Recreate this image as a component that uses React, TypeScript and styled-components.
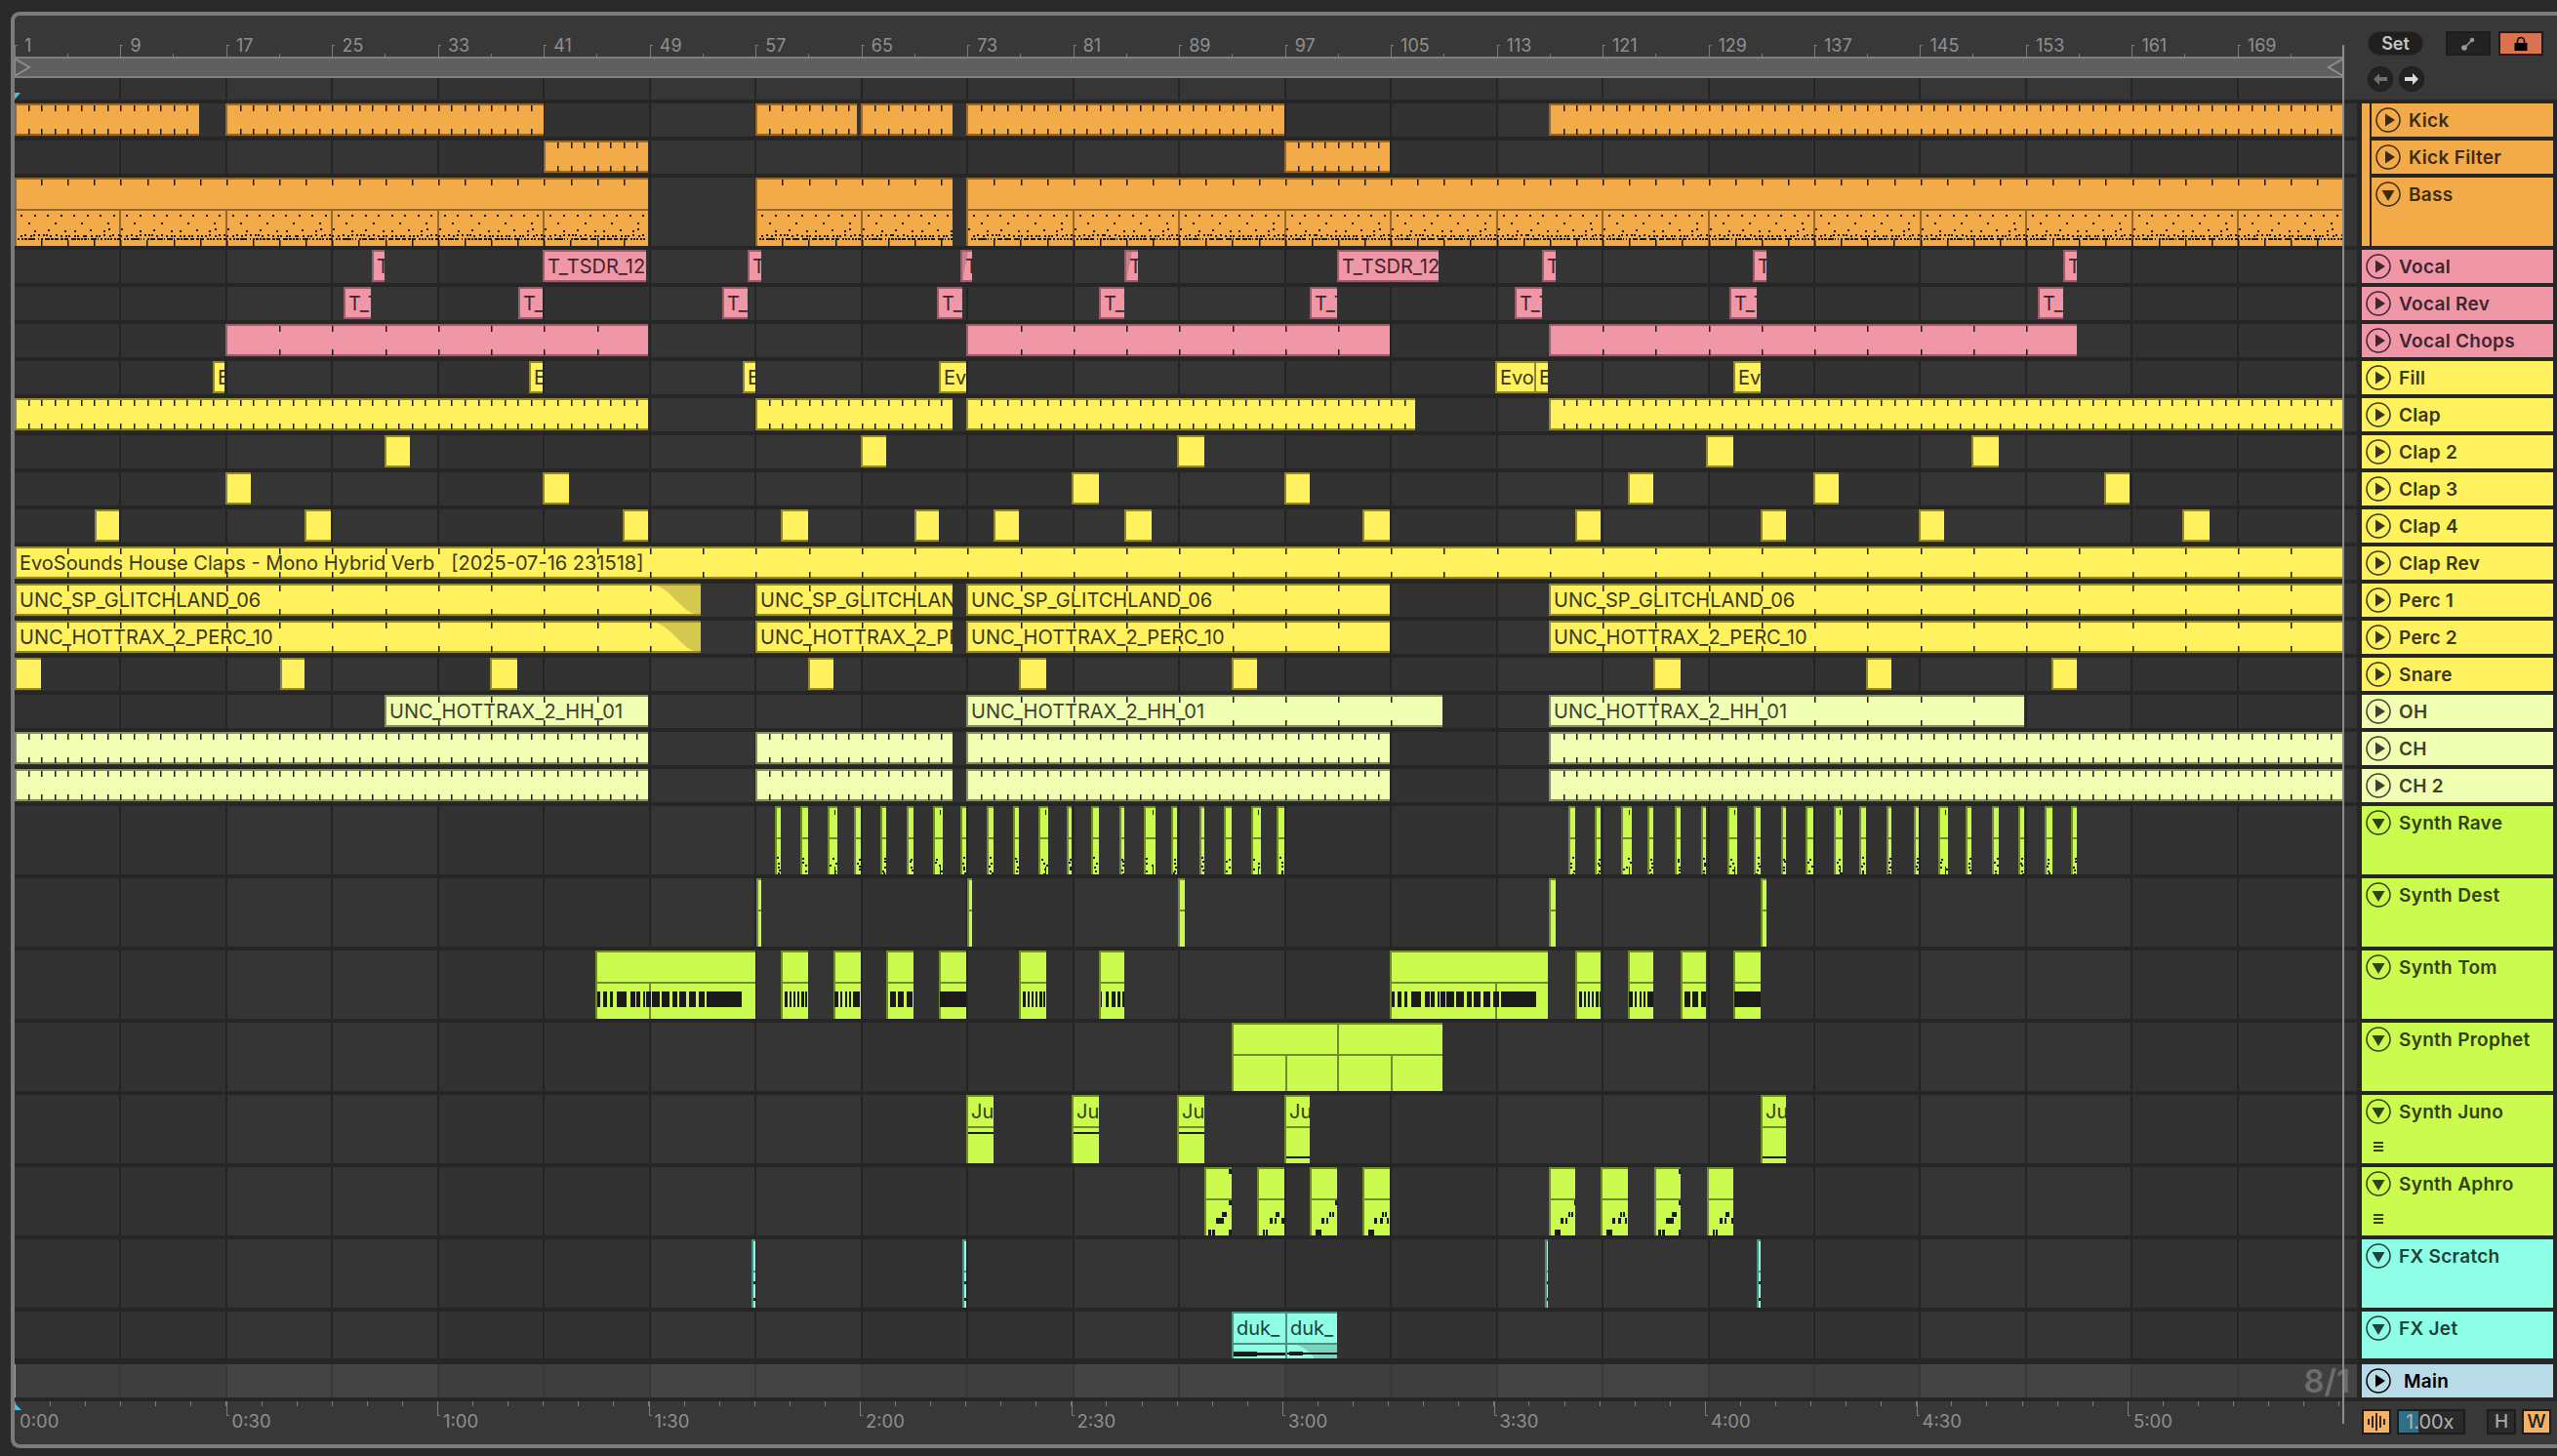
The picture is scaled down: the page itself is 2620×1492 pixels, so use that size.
import styled, { createGlobalStyle, css } from 'styled-components'

const ORIGIN = 15
const BAR = 13.56
const barX = (bar: number) => (bar - 1) * BAR

const GlobalStyle = createGlobalStyle`
  html, body {
    margin: 0;
    padding: 0;
    width: 2620px;
    height: 1492px;
    overflow: hidden;
    background: #2a2a2a;
  }
  body {
    font-family: Inter, "Liberation Sans", sans-serif;
  }
`

type Tint = { bg: string; edge: string; ink: string }

const tints: Record<string, Tint> = {
  orange: { bg: '#f3ab4a', edge: '#94692f', ink: '#3d2b10' },
  pink: { bg: '#f097a7', edge: '#96606b', ink: '#41242d' },
  yellow: { bg: '#fff25e', edge: '#8f8838', ink: '#3a3713' },
  pale: { bg: '#f1ffb2', edge: '#858c67', ink: '#3d4130' },
  lime: { bg: '#ccfb4f', edge: '#738c2f', ink: '#33400f' },
  cyan: { bg: '#8effe6', edge: '#4f8f82', ink: '#21403a' },
  main: { bg: '#b9dbe8', edge: '#6d8792', ink: '#000000' },
}

const timelineBg = (a: string, b: string, line: string) => css`
  background:
    linear-gradient(${a}, ${a}) 0 0 / 1px 100% no-repeat,
    repeating-linear-gradient(90deg, ${line} 0 1px, transparent 1px 107.47px, ${line} 107.47px 108.47px),
    repeating-linear-gradient(90deg, ${a} 0 216.94px, ${b} 216.94px 433.88px);
`

const Frame = styled.div`
  position: relative;
  box-sizing: border-box;
  width: 2609px;
  height: 1472px;
  margin: 12px 0 0 11px;
  border: 4px solid #7b7b7b;
  border-right: none;
  border-radius: 9px 0 0 9px;
  background: #383838;
  display: flex;
  flex-direction: column;
`

const LoopEdge = styled.div`
  position: absolute;
  left: 2385px;
  top: 30px;
  width: 2px;
  height: 1413px;
  background: #8c8c8c;
  z-index: 5;
`

const Header = styled.div`
  display: flex;
  height: 86px;
  flex: none;
`

const RulerColumn = styled.div`
  width: 2386px;
  flex: none;
  display: flex;
  flex-direction: column;
`

const BarRuler = styled.div`
  height: 42px;
  display: flex;
  overflow: hidden;
`

const BarCell = styled.div`
  position: relative;
  flex: none;
  width: 108.47px;
  box-sizing: border-box;
  height: 42px;
  padding: 21px 0 0 10px;
  font-size: 18px;
  line-height: 20px;
  color: #8f8f8f;
  background: linear-gradient(#7b7b7b, #7b7b7b) 54px 39px / 1px 3px no-repeat;
  &::before {
    content: '';
    position: absolute;
    left: 0;
    top: 30px;
    width: 3px;
    height: 12px;
    border-left: 1px solid #7b7b7b;
    border-top: 1px solid #7b7b7b;
    box-sizing: border-box;
  }
`

const LoopBar = styled.div`
  position: relative;
  box-sizing: border-box;
  height: 22px;
  background: #5f5f5f;
  border-top: 2px solid #7f7f7f;
  border-bottom: 2px solid #7f7f7f;
  overflow: hidden;
`

const LoopCap = styled.svg<{ $right?: boolean }>`
  position: absolute;
  top: 0;
  width: 17px;
  height: 18px;
  ${p => (p.$right ? 'right: 0;' : 'left: 0;')}
`

const EmptyLane = styled.div`
  position: relative;
  height: 22px;
  ${timelineBg('#333333', '#363636', '#252525')}
`

const StartFlag = styled.div`
  position: absolute;
  left: 0;
  top: 15px;
  width: 6px;
  height: 7px;
  background: #45c3dc;
  clip-path: polygon(0 100%, 100% 0, 0 0);
`

const HeaderControls = styled.div`
  box-sizing: border-box;
  padding: 16px 0 0 25px;
  display: flex;
  flex-direction: column;
  gap: 11px;
`

const ControlRow = styled.div`
  display: flex;
  align-items: center;
`

const SetPill = styled.div`
  box-sizing: border-box;
  width: 57px;
  height: 25px;
  margin-right: 23px;
  border-radius: 13px;
  background: #1f1f1f;
  border: 1px solid #2c2c2c;
  color: #c4c4c4;
  font-size: 18px;
  font-weight: 600;
  line-height: 23px;
  text-align: center;
`

const SquareButton = styled.div<{ $on?: boolean }>`
  box-sizing: border-box;
  width: 46px;
  height: 25px;
  margin-right: 8px;
  border: 2px solid #1d1d1d;
  background: ${p => (p.$on ? '#da7450' : '#222222')};
  display: flex;
  align-items: center;
  justify-content: center;
`

const RoundButton = styled.div`
  box-sizing: border-box;
  width: 26px;
  height: 26px;
  margin-right: 6px;
  border-radius: 50%;
  background: #232323;
  border: 1px solid #1a1a1a;
  display: flex;
  align-items: center;
  justify-content: center;
`

const TrackList = styled.div`
  flex: none;
  display: flex;
  flex-direction: column;
  gap: 4px;
  padding: 4px 0;
  background: #262626;
`

const TrackRow = styled.div<{ $h: number; $after?: number }>`
  display: flex;
  height: ${p => p.$h}px;
  gap: 5px;
  margin-bottom: ${p => p.$after ?? 0}px;
`

const Lane = styled.div<{ $master?: boolean }>`
  position: relative;
  flex: none;
  width: 2400px;
  overflow: hidden;
  ${p => (p.$master ? timelineBg('#3f3f3f', '#444444', '#383838') : timelineBg('#323232', '#353535', '#242424'))}
  ${p =>
    p.$master &&
    css`
      display: flex;
      align-items: center;
      justify-content: flex-end;
      padding-right: 7px;
      box-sizing: border-box;
      &::before {
        content: '';
        position: absolute;
        left: 0;
        top: 0;
        width: 1px;
        height: 100%;
        background: #45c3dc;
      }
    `}
`

const Meter = styled.span`
  font-size: 33px;
  font-weight: 600;
  color: #6c6c6c;
`

const Clip = styled.div<{ $t: Tint; $tall?: boolean }>`
  position: absolute;
  top: 0;
  height: ${p => (p.$tall ? '100%' : '33px')};
  overflow: hidden;
  background: ${p => p.$t.bg};
  color: ${p => p.$t.ink};
  box-shadow:
    inset 2px 0 0 ${p => p.$t.edge},
    inset 0 2px 0 ${p => p.$t.edge}
    ${p => (p.$tall ? '' : `, inset 0 -2px 0 ${p.$t.edge}`)};
`

const ClipName = styled.div`
  position: relative;
  z-index: 1;
  padding-left: 5px;
  height: 32px;
  overflow: hidden;
  font-size: 20px;
  line-height: 35px;
  white-space: pre;
`

const ClipRule = styled.div<{ $t: Tint }>`
  position: absolute;
  left: 0;
  right: 0;
  top: 32px;
  height: 2px;
  background: ${p => p.$t.edge};
`

const ClipArt = styled.svg`
  position: absolute;
  left: 0;
  top: 0;
  width: 100%;
  height: 100%;
`

const Head = styled.div<{ $t: Tint; $grouped?: boolean }>`
  position: relative;
  flex: none;
  box-sizing: border-box;
  width: 196px;
  height: 100%;
  padding-left: ${p => (p.$grouped ? '14px' : '4px')};
  color: ${p => p.$t.ink};
  background: ${p =>
    p.$grouped ? `linear-gradient(${p.$t.bg}, ${p.$t.bg}) 10px 0 / 186px 100% no-repeat` : p.$t.bg};
`

const GroupStrip = styled.div<{ $t: Tint; $last?: boolean }>`
  position: absolute;
  left: 0;
  top: 0;
  width: 8px;
  height: ${p => (p.$last ? '100%' : 'calc(100% + 4px)')};
  background: ${p => p.$t.bg};
`

const HeadTop = styled.div<{ $wide?: boolean }>`
  display: flex;
  align-items: center;
  gap: ${p => (p.$wide ? '13px' : '8px')};
  height: 34px;
  font-size: 19px;
  font-weight: 600;
  letter-spacing: 0.3px;
`

const FoldIcon = styled.svg`
  flex: none;
  width: 26px;
  height: 26px;
`

const ChainGlyph = styled.div`
  box-sizing: border-box;
  width: 10px;
  height: 10px;
  margin: 14px 0 0 8px;
  border-top: 2px solid currentColor;
  border-bottom: 2px solid currentColor;
  position: relative;
  &::after {
    content: '';
    position: absolute;
    left: 0;
    right: 0;
    top: 2px;
    height: 2px;
    background: currentColor;
  }
`

const BottomBar = styled.div`
  flex: 1;
  display: flex;
`

const TimeRuler = styled.div`
  position: relative;
  flex: none;
  width: 2386px;
  display: flex;
  overflow: hidden;
  background: repeating-linear-gradient(90deg, #7b7b7b 0 1px, transparent 1px 36.08px) 0 0 / 100% 5px no-repeat;
`

const TimeCell = styled.div<{ $first?: boolean }>`
  position: relative;
  flex: none;
  width: 216.5px;
  box-sizing: border-box;
  padding: 8px 0 0 ${p => (p.$first ? '5px' : '6px')};
  font-size: 18.5px;
  line-height: 24px;
  color: #8f8f8f;
  ${p =>
    !p.$first &&
    css`
      &::before {
        content: '';
        position: absolute;
        left: 0;
        top: 0;
        width: 3px;
        height: 15px;
        box-sizing: border-box;
        border-left: 1px solid #7b7b7b;
        border-bottom: 1px solid #7b7b7b;
      }
    `}
`

const EndFlag = styled.div`
  position: absolute;
  left: 0;
  top: 2px;
  width: 7px;
  height: 7px;
  background: #45c3dc;
  clip-path: polygon(0 0, 100% 100%, 0 100%);
`

const BottomControls = styled.div`
  display: flex;
  padding: 8px 0 0 19px;
`

const WaveButton = styled.div`
  box-sizing: border-box;
  width: 30px;
  height: 26px;
  margin-right: 6px;
  border: 2px solid #1d1d1d;
  background: #f5b266;
  display: flex;
  align-items: center;
  justify-content: center;
`

const Tempo = styled.div`
  position: relative;
  box-sizing: border-box;
  width: 70px;
  height: 26px;
  margin-right: 22px;
  border: 2px solid #1d1d1d;
  background: #2a2a2a;
  color: #b2b2b2;
  font-size: 20px;
  font-weight: 400;
  line-height: 22px;
  padding-left: 7px;
  &::before {
    content: '';
    position: absolute;
    left: 0;
    top: 0;
    bottom: 0;
    width: 20px;
    background: #2f6f87;
  }
`

const TempoValue = styled.span`
  position: relative;
`

const LetterButton = styled.div<{ $on?: boolean }>`
  box-sizing: border-box;
  width: 30px;
  height: 26px;
  margin-right: 6px;
  border: 2px solid #1d1d1d;
  background: ${p => (p.$on ? '#f5b266' : '#2a2a2a')};
  color: ${p => (p.$on ? '#1b1b1b' : '#a8a8a8')};
  font-size: 19px;
  font-weight: 500;
  line-height: 22px;
  text-align: center;
`

type Span = [number, number]

type ClipData = {
  from: number
  to: number
  text?: string
  step?: number
  tall?: boolean
  ink?: string
  edge?: string
  shade?: string
}

const rect = (x: number, y: number, w: number, h: number) => `M${x} ${y}h${w}v${h}h${-w}z`

// bar ticks, top and bottom, placed on the song grid and not on the clip
const tickPath = (from: number, to: number, step: number, height: number, bottom = true) => {
  let d = ''
  const left = from - ORIGIN
  for (let b = 1; b < 180; b += step) {
    const x = Math.round(barX(b) - left)
    if (x < 4 || x >= to - from) continue
    d += rect(x, 2, 1.5, 6)
    if (bottom) d += rect(x, height - 7, 1.5, 6)
  }
  return d
}

const hash = (n: number) => {
  const s = Math.sin(n * 91.17) * 43758.5453
  return s - Math.floor(s)
}

const bassNoise = (from: number, to: number) => {
  let d = ''
  const left = from - ORIGIN
  const w = to - from
  const put = (x: number, y: number, dw: number, dh: number) => {
    const px = Math.round(x - left)
    if (px >= 2 && px + dw <= w) d += rect(px, y, dw, dh)
  }
  for (let b = 1; b < 178; b++) {
    const x = barX(b)
    const k = (b - 1) % 8
    put(x + 6, 38, 2, 2)
    if (k % 2 === 0) put(x + 14, 46, 2, 2)
    put(x + 1 + hash(k) * 10, 52 + Math.round(hash(k + 20) * 2), 2, 2)
    for (let i = 0; i < 3; i++) put(x + i * 4.5 + hash(k * 3 + i) * 2, 58 + Math.round(hash(k + i + 40)), 2, 2)
    for (let i = 0; i < 4; i++) put(x + i * 3.4, 62, 1 + Math.round(hash(k * 5 + i) * 2), 2)
    if (k % 2 === 0) put(x + 27, 64, 1.5, 6)
  }
  return d
}

const splitPath = (from: number, to: number, y = 34, h = 36) => {
  let d = ''
  for (let b = 1; b < 180; b += 8) {
    const x = Math.round(barX(b) - (from - ORIGIN))
    if (x > 2 && x < to - from) d += rect(x - 1, y, 2, h)
  }
  return d
}

const plain = (spans: Span[], step?: number): ClipData[] => spans.map(([from, to]) => ({ from, to, step }))
const named = (spans: Span[], text: string): ClipData[] => spans.map(([from, to]) => ({ from, to, text }))

const kickSpans: Span[] = [[15, 204], [231, 557], [774, 878], [882, 976], [990, 1316], [1587, 2401]]
const hatSpans: Span[] = [[15, 664], [774, 976], [990, 1424], [1587, 2401]]

const bassClips: ClipData[] = ([[15, 664], [774, 976], [990, 2401]] as Span[]).map(([from, to]) => ({
  from,
  to,
  tall: true,
  ink: tickPath(from, to, 2, 70, false) + bassNoise(from, to),
  edge: splitPath(from, to),
}))

const fadeOut = (w: number) => `M${w - 47} 2C${w - 32} 4 ${w - 20} 28 ${w - 6} 31H${w}V2Z`

const percClips = (name: string): ClipData[] => [
  { from: 15, to: 718, text: name, step: 4, shade: fadeOut(703) },
  { from: 774, to: 976, text: name, step: 4 },
  { from: 990, to: 1424, text: name, step: 4 },
  { from: 1587, to: 2401, text: name, step: 4 },
]

const raveSpans: Span[] = [
  [794, 800], [820, 828], [848, 858], [875, 882], [902, 908], [929, 936], [956, 966], [984, 990], [1011, 1018], [1038, 1044],
  [1064, 1074], [1093, 1098], [1118, 1126], [1147, 1152], [1172, 1184], [1200, 1206], [1229, 1234], [1254, 1262], [1282, 1292], [1308, 1316],
  [1607, 1614], [1634, 1640], [1661, 1672], [1688, 1694], [1716, 1722], [1743, 1748], [1770, 1780], [1797, 1804], [1825, 1830], [1850, 1858],
  [1879, 1888], [1905, 1912], [1933, 1938], [1961, 1966], [1986, 1996], [2014, 2020], [2041, 2048], [2068, 2074], [2095, 2103], [2122, 2128],
]

const raveClips: ClipData[] = raveSpans.map(([from, to], i) => {
  let ink = ''
  const w = to - from
  for (let k = 0; k < 5; k++) {
    const x = 2 + Math.floor(hash(i * 7 + k) * Math.max(w - 3, 1))
    ink += rect(x, 52 + k * 4 + Math.floor(hash(i + k * 3) * 3), 2, 2)
  }
  if (w > 8) ink += rect(w - 3, 4, 1, 5) + rect(w - 3, 62, 1, 8)
  return { from, to, tall: true, ink }
})

const destClips: ClipData[] = ([[775, 780], [991, 996], [1207, 1214], [1587, 1594], [1804, 1810]] as Span[]).map(([from, to]) => ({
  from,
  to,
  tall: true,
}))

const bars = (list: Span[]) => list.map(([a, b]) => rect(a, 42, b - a, 16)).join('')

const tomLong = bars([
  [2, 5], [8, 12], [15, 18], [22, 32], [36, 41], [42, 46], [49, 51], [52, 57], [58, 66],
  [68, 76], [79, 84], [86, 93], [96, 103], [106, 112], [114, 150],
])
const tomShort = [
  bars([[4, 7], [9, 11], [13, 15], [17, 19], [21, 24], [25, 27]]),
  bars([[1, 5], [7, 9], [12, 14], [16, 18], [20, 27]]),
  bars([[4, 10], [12, 18], [21, 27]]),
  bars([[1, 28]]),
]

const tomClips: ClipData[] = [
  { from: 610, to: 774, tall: true, ink: tomLong, edge: rect(55, 34, 2, 36) },
  { from: 800, to: 828, tall: true, ink: tomShort[0] },
  { from: 854, to: 882, tall: true, ink: tomShort[1] },
  { from: 908, to: 936, tall: true, ink: tomShort[2] },
  { from: 962, to: 990, tall: true, ink: tomShort[3] },
  { from: 1044, to: 1072, tall: true, ink: tomShort[0] },
  { from: 1126, to: 1152, tall: true, ink: bars([[2, 3], [7, 10], [13, 17], [19, 22], [24, 26]]) },
  { from: 1424, to: 1586, tall: true, ink: tomLong, edge: rect(108, 34, 2, 36) },
  { from: 1614, to: 1640, tall: true, ink: tomShort[0] },
  { from: 1668, to: 1694, tall: true, ink: tomShort[1] },
  { from: 1722, to: 1748, tall: true, ink: tomShort[2] },
  { from: 1776, to: 1804, tall: true, ink: tomShort[3] },
]

const prophetClips: ClipData[] = [
  {
    from: 1262,
    to: 1478,
    tall: true,
    edge: rect(108, 2, 2, 30) + rect(55, 34, 2, 36) + rect(108, 34, 2, 36) + rect(163, 34, 2, 36),
  },
]

const junoClips: ClipData[] = [
  { from: 990, to: 1018, y: 38 },
  { from: 1098, to: 1126, y: 38 },
  { from: 1206, to: 1234, y: 38 },
  { from: 1316, to: 1342, y: 63 },
  { from: 1804, to: 1830, y: 63 },
].map(({ from, to, y }) => ({ from, to, tall: true, text: 'Juno', ink: rect(2, y, to - from - 2, 2) }))

type Note = [number, number, number, number]
const aphroA: Note[] = [[25, 2, 3, 5], [25, 34, 3, 5], [18, 46, 5, 5], [12, 52, 8, 6], [4, 64, 3, 6], [8, 64, 3, 6], [25, 64, 3, 6]]
const aphroB: Note[] = [[19, 46, 4, 5], [13, 52, 3, 6], [18, 52, 2, 6], [25, 52, 3, 6], [6, 64, 2, 6], [9, 64, 2, 6]]
const aphroC: Note[] = [[26, 34, 2, 5], [20, 46, 2, 5], [23, 46, 2, 5], [12, 52, 3, 6], [17, 52, 2, 6], [6, 64, 6, 6]]
const aphroD: Note[] = [[20, 46, 2, 5], [23, 46, 2, 5], [12, 52, 3, 6], [18, 52, 3, 6], [25, 52, 2, 6], [6, 64, 6, 6]]
const notes = (list: Note[]) => list.map(n => rect(...n)).join('')

const aphroClips: ClipData[] = (
  [
    [1234, 1262, aphroA], [1288, 1316, aphroB], [1342, 1370, aphroC], [1396, 1424, aphroD],
    [1587, 1614, aphroC], [1640, 1668, aphroD], [1695, 1722, aphroA], [1749, 1776, aphroB],
  ] as [number, number, Note[]][]
).map(([from, to, list]) => ({ from, to, tall: true, ink: notes(list) }))

const scratchClips: ClipData[] = ([[770, 774], [986, 990], [1583, 1586], [1800, 1804]] as Span[]).map(([from, to]) => ({
  from,
  to,
  tall: true,
  ink: rect(2, 43, 2, 3) + rect(2, 60, 2, 3),
}))

const jetClips: ClipData[] = [
  { from: 1262, to: 1317, tall: true, text: 'duk_', ink: rect(2, 42, 53, 3) + rect(2, 41, 24, 5) },
  {
    from: 1317,
    to: 1370,
    tall: true,
    text: 'duk_',
    ink: rect(2, 42, 51, 2) + rect(4, 41, 14, 4),
    shade: 'M12 34C18 36 26 42 30 48H53V34Z',
  },
]

type Track = {
  name: string
  tint: string
  h: number
  open?: boolean
  group?: 'mid' | 'last'
  menu?: boolean
  after?: number
  clips: ClipData[]
}

const tracks: Track[] = [
  { name: 'Kick', tint: 'orange', h: 34, group: 'mid', clips: plain(kickSpans, 1) },
  { name: 'Kick Filter', tint: 'orange', h: 34, group: 'mid', clips: plain([[557, 664], [1316, 1424]], 1) },
  { name: 'Bass', tint: 'orange', h: 70, open: true, group: 'last', clips: bassClips },
  {
    name: 'Vocal',
    tint: 'pink',
    h: 34,
    clips: [
      ...named([[381, 394], [556, 662], [766, 780]], 'T_TSDR_12'),
      { from: 984, to: 996, text: 'T_TSDR_12', shade: 'M2 2H8L2 32Z' },
      { from: 1152, to: 1166, text: 'T_TSDR_12', shade: 'M2 2H8L2 32Z' },
      ...named([[1370, 1474], [1580, 1594], [1796, 1810], [2114, 2128]], 'T_TSDR_12'),
    ],
  },
  {
    name: 'Vocal Rev',
    tint: 'pink',
    h: 34,
    clips: named([[352, 380], [531, 556], [740, 766], [960, 986], [1126, 1152], [1342, 1370], [1552, 1580], [1772, 1800], [2088, 2114]], 'T_TSDR_12'),
  },
  { name: 'Vocal Chops', tint: 'pink', h: 34, clips: plain([[231, 664], [990, 1424], [1587, 2128]], 4) },
  {
    name: 'Fill',
    tint: 'yellow',
    h: 34,
    clips: named([[218, 230], [542, 556], [761, 774], [962, 990], [1532, 1572], [1572, 1586], [1776, 1804]], 'EvoSounds'),
  },
  { name: 'Clap', tint: 'yellow', h: 34, clips: plain([[15, 664], [774, 976], [990, 1450], [1587, 2401]], 1) },
  { name: 'Clap 2', tint: 'yellow', h: 34, clips: plain([[394, 420], [882, 908], [1206, 1234], [1748, 1776], [2020, 2048]]) },
  { name: 'Clap 3', tint: 'yellow', h: 34, clips: plain([[231, 257], [556, 583], [1098, 1126], [1316, 1342], [1668, 1694], [1858, 1884], [2156, 2182]]) },
  {
    name: 'Clap 4',
    tint: 'yellow',
    h: 34,
    clips: plain([[97, 122], [312, 339], [638, 664], [800, 828], [937, 962], [1018, 1044], [1152, 1180], [1396, 1424], [1614, 1640], [1804, 1830], [1966, 1992], [2236, 2264]]),
  },
  {
    name: 'Clap Rev',
    tint: 'yellow',
    h: 34,
    clips: [{ from: 15, to: 2401, step: 4, text: 'EvoSounds House Claps - Mono Hybrid Verb   [2025-07-16 231518]' }],
  },
  { name: 'Perc 1', tint: 'yellow', h: 34, clips: percClips('UNC_SP_GLITCHLAND_06') },
  { name: 'Perc 2', tint: 'yellow', h: 34, clips: percClips('UNC_HOTTRAX_2_PERC_10') },
  { name: 'Snare', tint: 'yellow', h: 34, clips: plain([[15, 42], [287, 312], [502, 530], [828, 854], [1044, 1072], [1262, 1288], [1694, 1722], [1912, 1938], [2102, 2128]]) },
  {
    name: 'OH',
    tint: 'pale',
    h: 34,
    clips: ([[394, 664], [990, 1478], [1587, 2074]] as Span[]).map(([from, to]) => ({ from, to, step: 4, text: 'UNC_HOTTRAX_2_HH_01' })),
  },
  { name: 'CH', tint: 'pale', h: 34, clips: plain(hatSpans, 1) },
  { name: 'CH 2', tint: 'pale', h: 34, clips: plain(hatSpans, 1) },
  { name: 'Synth Rave', tint: 'lime', h: 70, open: true, clips: raveClips },
  { name: 'Synth Dest', tint: 'lime', h: 70, open: true, clips: destClips },
  { name: 'Synth Tom', tint: 'lime', h: 70, open: true, clips: tomClips },
  { name: 'Synth Prophet', tint: 'lime', h: 70, open: true, clips: prophetClips },
  { name: 'Synth Juno', tint: 'lime', h: 70, open: true, menu: true, clips: junoClips },
  { name: 'Synth Aphro', tint: 'lime', h: 70, open: true, menu: true, clips: aphroClips },
  { name: 'FX Scratch', tint: 'cyan', h: 70, open: true, clips: scratchClips },
  { name: 'FX Jet', tint: 'cyan', h: 48, open: true, after: 2, clips: jetClips },
]

const barLabels = Array.from({ length: 22 }, (_, i) => 1 + i * 8)
const timeLabels = ['0:00', '0:30', '1:00', '1:30', '2:00', '2:30', '3:00', '3:30', '4:00', '4:30', '5:00']

const Fold = ({ open }: { open?: boolean }) => (
  <FoldIcon viewBox="0 0 26 26">
    <circle cx="13" cy="13" r="12" fill="none" stroke="currentColor" strokeWidth="1.5" />
    <polygon points={open ? '6.5,9 19.5,9 13,20' : '10,6.5 20,13 10,19.5'} fill="currentColor" />
  </FoldIcon>
)

const ClipView = ({ clip, tint }: { clip: ClipData; tint: Tint }) => {
  const { from, to, tall, text, step } = clip
  const ticks = !tall && step ? tickPath(from, to, step, 33) : ''
  return (
    <Clip $t={tint} $tall={tall} style={{ left: from - ORIGIN, width: to - from }}>
      {tall && <ClipRule $t={tint} />}
      <ClipArt>
        {clip.shade && <path d={clip.shade} fill="rgba(0,0,0,0.17)" />}
        {clip.edge && <path d={clip.edge} fill={tint.edge} />}
        <path d={(clip.ink ?? '') + ticks} fill="#1a1a1a" />
      </ClipArt>
      {text && <ClipName>{text}</ClipName>}
    </Clip>
  )
}

const TrackHead = ({ track }: { track: Track }) => {
  const tint = tints[track.tint]
  const grouped = !!track.group
  return (
    <Head $t={tint} $grouped={grouped}>
      {grouped && <GroupStrip $t={tint} $last={track.group === 'last'} />}
      <HeadTop>
        <Fold open={track.open} />
        {track.name}
      </HeadTop>
      {track.menu && <ChainGlyph />}
    </Head>
  )
}

export default function App() {
  return (
    <>
      <GlobalStyle />
      <Frame>
        <LoopEdge />
        <Header>
          <RulerColumn>
            <BarRuler>
              {barLabels.map(n => (
                <BarCell key={n}>{n}</BarCell>
              ))}
            </BarRuler>
            <LoopBar>
              <LoopCap viewBox="0 0 17 18">
                <polygon points="0,0 15,9 0,18" fill="#555" stroke="#8c8c8c" strokeWidth="2" />
              </LoopCap>
              <LoopCap $right viewBox="0 0 17 18">
                <polygon points="17,0 2,9 17,18" fill="#555" stroke="#8c8c8c" strokeWidth="2" />
              </LoopCap>
            </LoopBar>
            <EmptyLane>
              <StartFlag />
            </EmptyLane>
          </RulerColumn>
          <HeaderControls>
            <ControlRow>
              <SetPill>Set</SetPill>
              <SquareButton>
                <svg width="16" height="16" viewBox="0 0 16 16">
                  <line x1="4" y1="12" x2="12" y2="4" stroke="#9a9a9a" strokeWidth="1.6" />
                  <circle cx="4" cy="12" r="2.8" fill="#9a9a9a" />
                  <circle cx="12" cy="4" r="2.2" fill="#9a9a9a" />
                </svg>
              </SquareButton>
              <SquareButton $on>
                <svg width="16" height="16" viewBox="0 0 16 16">
                  <path d="M4.5 7V5a3.5 3.5 0 0 1 7 0v2" fill="none" stroke="#000" strokeWidth="1.6" />
                  <rect x="1.5" y="7" width="13" height="8" fill="#000" />
                </svg>
              </SquareButton>
            </ControlRow>
            <ControlRow>
              <RoundButton>
                <svg width="16" height="14" viewBox="0 0 16 14">
                  <path d="M7 1 1 7l6 6V9h8V5H7z" fill="#6f6f6f" />
                </svg>
              </RoundButton>
              <RoundButton>
                <svg width="16" height="14" viewBox="0 0 16 14">
                  <path d="M9 1l6 6-6 6V9H1V5h8z" fill="#dcdcdc" />
                </svg>
              </RoundButton>
            </ControlRow>
          </HeaderControls>
        </Header>
        <TrackList>
          {tracks.map(track => (
            <TrackRow key={track.name} $h={track.h} $after={track.after}>
              <Lane>
                {track.clips.map(clip => (
                  <ClipView key={`${clip.from}-${clip.to}`} clip={clip} tint={tints[track.tint]} />
                ))}
              </Lane>
              <TrackHead track={track} />
            </TrackRow>
          ))}
          <TrackRow $h={34}>
            <Lane $master>
              <Meter>8/1</Meter>
            </Lane>
            <Head $t={tints.main}>
              <HeadTop $wide>
                <Fold />
                Main
              </HeadTop>
            </Head>
          </TrackRow>
        </TrackList>
        <BottomBar>
          <TimeRuler>
            <EndFlag />
            {timeLabels.map((label, i) => (
              <TimeCell key={label} $first={i === 0}>
                {label}
              </TimeCell>
            ))}
          </TimeRuler>
          <BottomControls>
            <WaveButton>
              <svg width="20" height="18" viewBox="0 0 20 18">
                <path d="M2 6v6M6 3v12M10 0v18M14 3v12M18 6v6" stroke="#1a1a1a" strokeWidth="1.8" />
              </svg>
            </WaveButton>
            <Tempo>
              <TempoValue>1.00x</TempoValue>
            </Tempo>
            <LetterButton>H</LetterButton>
            <LetterButton $on>W</LetterButton>
          </BottomControls>
        </BottomBar>
      </Frame>
    </>
  )
}
